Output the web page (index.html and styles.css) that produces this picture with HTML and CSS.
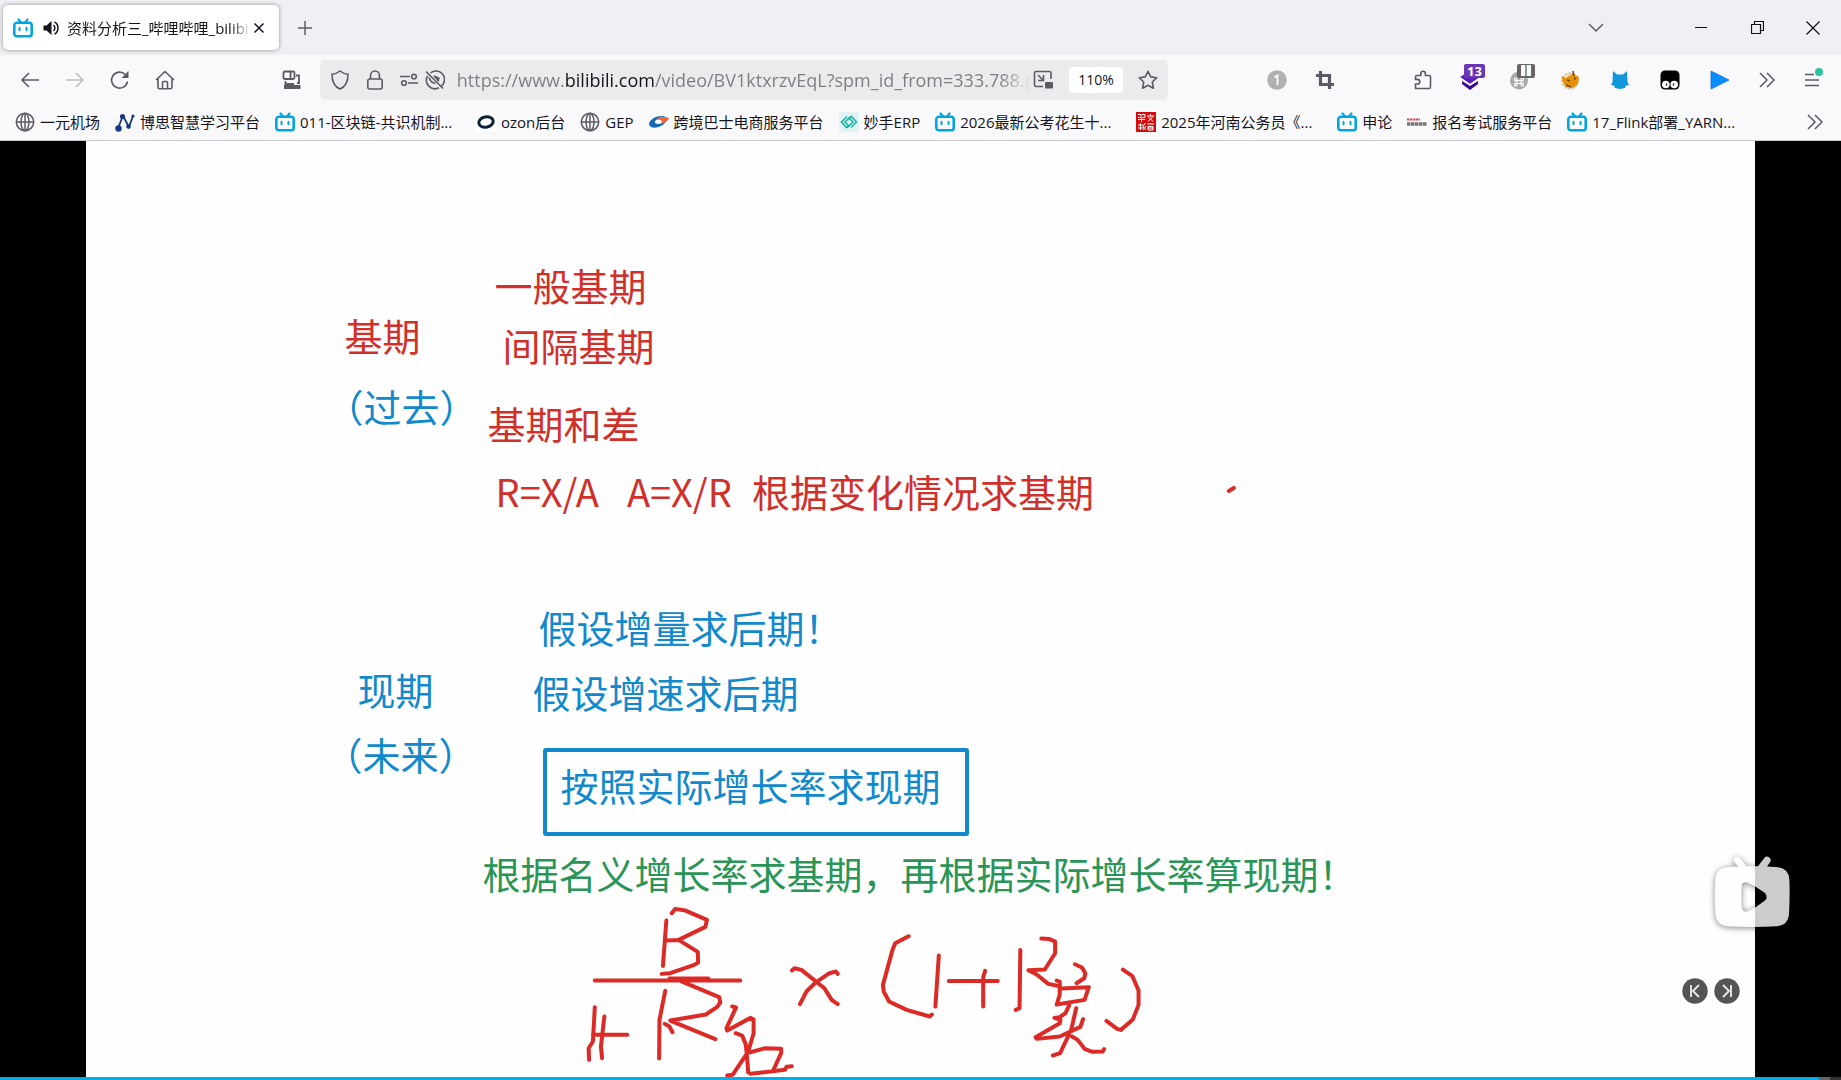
FILE: index.html
```html
<!DOCTYPE html>
<html lang="zh-CN">
<head>
<meta charset="utf-8">
<meta name="viewport" content="width=device-width, initial-scale=1">
<title>资料分析三_哔哩哔哩_bilibili</title>
<link rel="stylesheet" href="styles.css">
</head>
<body>
<svg class="symbols" aria-hidden="true">
  <symbol id="bili" viewBox="0 0 20 20">
    <path d="M5.500 1.500 8 4.500M14.500 1.500 12 4.500" stroke="#00a7de" stroke-width="2.200" stroke-linecap="round"/>
    <rect x="1.300" y="4.800" width="17.400" height="13.500" rx="2.600" fill="#fff" stroke="#00a7de" stroke-width="2.600"/>
    <path d="M6.500 9.800v2.400M13.500 9.800v2.400" stroke="#00a7de" stroke-width="2" stroke-linecap="round"/>
  </symbol>
  <symbol id="globe" viewBox="0 0 20 20">
    <g fill="none" stroke="#5b5b66" stroke-width="1.500"><circle cx="10" cy="10" r="8.700"/><ellipse cx="10" cy="10" rx="4" ry="8.700"/><path d="M1.300 10h17.400M10 1.300v17.400"/></g>
  </symbol>
  <symbol id="more" viewBox="0 0 20 20">
    <path d="m3 3 7 7-7 7M10 3l7 7-7 7" fill="none" stroke="#5b5b66" stroke-width="1.500"/>
  </symbol>
</svg>

<header class="browser">
  <div class="titlebar">
    <div class="tab">
      <svg class="icon"><use href="#bili"/></svg>
      <button class="plain speaker" aria-label="静音标签页">
        <svg width="18" height="18" viewBox="0 0 18 18"><path d="M1.500 6.500v5h3l5 4.500V2l-5 4.500z" fill="#15141a"/><path d="M11.500 6c1.800 1.500 1.800 4.500 0 6M12.500 2.800c4.600 2.500 4.600 9.900 0 12.400" fill="none" stroke="#15141a" stroke-width="1.500"/></svg>
      </button>
      <span class="tab-title">资料分析三_哔哩哔哩_bilibili</span>
      <button class="plain tab-close" aria-label="关闭标签页">
        <svg width="12" height="12" viewBox="0 0 12 12"><path d="m1.500 1.500 9 9m0-9-9 9" stroke="#15141a" stroke-width="1.500"/></svg>
      </button>
    </div>
    <button class="plain new-tab" aria-label="新建标签页">
      <svg width="16" height="16" viewBox="0 0 16 16"><path d="M8 1v14M1 8h14" stroke="#5b5b66" stroke-width="1.500"/></svg>
    </button>
    <div class="window-buttons">
      <button class="plain list-tabs" aria-label="列出所有标签页"><svg width="16" height="10" viewBox="0 0 16 10"><path d="m1 1 7 7 7-7" fill="none" stroke="#5b5b66" stroke-width="1.500"/></svg></button>
      <button class="plain win" aria-label="最小化"><svg width="12" height="12" viewBox="0 0 12 12"><path d="M0 5.500h12" stroke="#111"/></svg></button>
      <button class="plain win" aria-label="还原"><svg width="13" height="13" viewBox="0 0 13 13"><path d="M.500 3.500h9v9h-9zM3.500 3.500v-3h9v9h-3" fill="none" stroke="#111" stroke-width="1.200"/></svg></button>
      <button class="plain win" aria-label="关闭"><svg width="14" height="14" viewBox="0 0 14 14"><path d="m.500.500 13 13m0-13-13 13" stroke="#111" stroke-width="1.200"/></svg></button>
    </div>
  </div>

  <nav class="toolbar" aria-label="导航">
    <button class="plain nav-button" aria-label="后退"><svg class="icon" viewBox="0 0 20 20"><path d="M19 10H2m7-7-7 7 7 7" fill="none" stroke="#5b5b66" stroke-width="1.600"/></svg></button>
    <button class="plain nav-button" aria-label="前进" disabled><svg class="icon" viewBox="0 0 20 20"><path d="M1 10h17m-7-7 7 7-7 7" fill="none" stroke="#bdbdc2" stroke-width="1.600"/></svg></button>
    <button class="plain nav-button" aria-label="重新载入"><svg class="icon" viewBox="0 0 20 20"><path d="M17.500 11.500a8 8 0 1 1-2.200-7" fill="none" stroke="#5b5b66" stroke-width="1.600"/><path d="M18.500 1v7h-7z" fill="#5b5b66"/></svg></button>
    <button class="plain nav-button" aria-label="主页"><svg class="icon" viewBox="0 0 20 20"><path d="m1 10 9-8.500 9 8.500M3 8.500v8.700q0 1.500 1.500 1.500h11q1.500 0 1.500-1.500V8.500M7.500 18.500v-6q0-1 1-1h3q1 0 1 1v6" fill="none" stroke="#5b5b66" stroke-width="1.600"/></svg></button>
    <span class="spring"></span>
    <button class="plain side-button" aria-label="设备"><svg class="icon" viewBox="0 0 20 20"><g fill="none" stroke="#5b5b66" stroke-width="1.800"><rect x="1.500" y="1.500" width="11" height="7.500" rx="1.500"/><path d="M8.500 2v7M14 5.500h3V13h-2M3.500 11v5h8.500"/></g><path d="M4 13h8v2h6.500v4H2v-4h2z" fill="#5b5b66"/></svg></button>

    <div class="urlbar">
      <svg class="icon url-shield" viewBox="0 0 20 20"><path d="M10 1c2.500 2 5 3 8 3.200C18 12 15 17 10 19 5 17 2 12 2 4.200 5 4 7.500 3 10 1z" fill="none" stroke="#5b5b66" stroke-width="1.600"/></svg>
      <svg class="icon url-lock" viewBox="0 0 20 20"><path d="M5.500 9V5.500a4.500 4.500 0 0 1 9 0V9" fill="none" stroke="#5b5b66" stroke-width="1.600"/><rect x="2.800" y="9" width="14.400" height="10" rx="2" fill="none" stroke="#5b5b66" stroke-width="1.600"/></svg>
      <svg class="icon url-perms" viewBox="0 0 20 20"><g fill="none" stroke="#5b5b66" stroke-width="1.600"><path d="M1 6.500h10M9 13h10"/><circle cx="15" cy="6.500" r="2.300"/><circle cx="5" cy="13" r="2.300"/></g></svg>
      <svg class="icon url-eye" viewBox="0 0 20 20"><g fill="none" stroke="#5b5b66" stroke-width="1.600"><path d="m1 1.500 17 17M5.500 3A8.500 8.500 0 0 1 16.500 16M14 17.700A8.500 8.500 0 0 1 2.600 6"/><path d="M4 7.500c1 3.500 3 5.500 6.500 6M9 6l5 5"/></g><path d="m9 5 6 3-2 4z" fill="#5b5b66"/></svg>
      <input class="url-input" type="text" aria-label="网址" spellcheck="false" value="https://www.bilibili.com/video/BV1ktxrzvEqL?spm_id_from=333.788.p">
      <button class="plain url-pip" aria-label="画中画"><svg class="icon" viewBox="0 0 20 20"><path d="M18 9V3q0-1.500-1.500-1.500H3Q1.500 1.500 1.500 3v12q0 1.500 1.500 1.500h7M5 5l5 5m.500-5v5.500H5" fill="none" stroke="#5b5b66" stroke-width="1.600"/><rect x="12" y="12" width="8" height="6.500" rx="1" fill="#5b5b66"/></svg></button>
      <button class="plain zoom-level">110%</button>
      <button class="plain url-star" aria-label="添加书签"><svg class="icon" viewBox="0 0 20 20"><path d="m10 1.300 2.700 5.600 6.100.800-4.500 4.300 1.100 6.200L10 15.200l-5.400 3 1.100-6.200L1.200 7.700l6.100-.800z" fill="none" stroke="#5b5b66" stroke-width="1.600" stroke-linejoin="round"/></svg></button>
    </div>

    <span class="spring"></span>
    <button class="plain ext-first" aria-label="扩展 1"><svg class="icon" viewBox="0 0 20 20"><circle cx="10" cy="10" r="9.800" fill="#b0b0b2"/><path d="M7.500 7.500 10.500 5.500V15" fill="none" stroke="#fff" stroke-width="1.800"/></svg></button>
    <button class="plain ext-first" aria-label="截图"><svg class="icon" viewBox="0 0 20 20"><path d="M5.500 1v13.500H19M1 5.500h13.500V19" fill="none" stroke="#5b5b66" stroke-width="3.200"/></svg></button>
    <button class="plain side-button ext-puzzle" aria-label="扩展"><svg class="icon" viewBox="0 0 20 20"><path d="M2.500 18.500V14h2a2.300 2.300 0 0 0 0-4.600h-2V7q0-1.500 1.500-1.500h3.800V3.500a2.300 2.300 0 0 1 4.600 0v2H16q1.500 0 1.500 1.500v10q0 1.500-1.500 1.500z" fill="none" stroke="#5b5b66" stroke-width="1.600"/></svg></button>
    <button class="plain ext" aria-label="图层扩展"><svg class="icon" viewBox="0 0 20 20"><path d="m0 7 10-6 10 6-10 7z" fill="#5a1fb5"/><path d="m0 7 10 7 10-7v1l-10 7L0 8z" fill="#f9f9fb"/><path d="m2 11 8 5 8-5v3l-8 6-8-6z" fill="#37078f"/></svg><span class="badge badge-purple">13</span></button>
    <button class="plain ext" aria-label="快捷键扩展"><svg class="icon" viewBox="0 0 20 20"><circle cx="9" cy="10.500" r="9" fill="#aaa"/><g fill="none" stroke="#fff" stroke-width="1.200"><path d="M7 10.500h4v3H7z"/><circle cx="5.700" cy="9.500" r="1.300"/><circle cx="12.300" cy="9.500" r="1.300"/><circle cx="5.700" cy="14.500" r="1.300"/><circle cx="12.300" cy="14.500" r="1.300"/></g></svg><span class="badge badge-grey"><i></i></span></button>
    <button class="plain ext" aria-label="小狐狸扩展"><svg class="icon" viewBox="0 0 20 20"><circle cx="10" cy="11" r="8" fill="#f6dfb4" stroke="#999" stroke-dasharray="2 2"/><path d="M1 6l5 2 6-4 1-3 2 4 4 2-1 7-5 4-7-1-3-5z" fill="#e8910c"/><path d="m7 10 3 1m4-3 2 1M6 15l5 2M13 1l1 5" stroke="#744313" stroke-width="1.500"/></svg></button>
    <button class="plain ext" aria-label="猫扩展"><svg class="icon" viewBox="0 0 20 20"><path d="M3 1 7 4.500h6L17 1l.500 11 1.500 3-3 .500-1 2.500-5 1-5-1-1-2.500L1 15l1.500-3z" fill="#1296db"/></svg></button>
    <button class="plain ext" aria-label="脚本管理器"><svg class="icon" viewBox="0 0 20 20"><rect x=".500" y=".500" width="19" height="19" rx="4.500" fill="#000"/><circle cx="5.800" cy="14.500" r="3.800" fill="#fff"/><circle cx="14.200" cy="14.500" r="3.800" fill="#fff"/><path d="M6.500 13.500v2M13.500 13.500v2" stroke="#000" stroke-width="1.200"/></svg></button>
    <button class="plain ext" aria-label="播放扩展"><svg class="icon" viewBox="0 0 20 20"><path d="M1 1 19 10 1 19z" fill="#0b8cff" stroke="#0874d8" stroke-width=".800"/></svg></button>
    <button class="plain side-button" aria-label="更多工具"><svg class="icon"><use href="#more"/></svg></button>
    <button class="plain app-menu" aria-label="打开应用程序菜单"><svg class="icon" viewBox="0 0 20 20"><path d="M3 4.500h9M3 10h14M3 15.500h14" stroke="#5b5b66" stroke-width="1.600"/></svg><span class="menu-dot"></span></button>
  </nav>

  <nav class="bookmarks" aria-label="书签">
    <a class="bookmark" href="#"><svg class="icon"><use href="#globe"/></svg><span>一元机场</span></a>
    <a class="bookmark" href="#"><svg class="icon" viewBox="0 0 20 20"><g stroke="#14397f" stroke-width="1.800" fill="none"><path d="m3 16 5-12 6 11 4-11"/></g><g fill="#14397f"><circle cx="3.500" cy="16.500" r="3.200"/><circle cx="7.500" cy="4.500" r="2.600"/><circle cx="13.500" cy="14.500" r="2.300"/><circle cx="18" cy="4" r="1.600"/></g></svg><span>博思智慧学习平台</span></a>
    <a class="bookmark bookmark-long" href="#"><svg class="icon"><use href="#bili"/></svg><span>011-区块链-共识机制...</span></a>
    <a class="bookmark" href="#"><svg class="icon" viewBox="0 0 20 20"><rect width="20" height="20" fill="#fff"/><ellipse cx="10" cy="10" rx="7.300" ry="5.200" transform="rotate(-12 10 10)" fill="none" stroke="#0b2337" stroke-width="3"/></svg><span>ozon后台</span></a>
    <a class="bookmark" href="#"><svg class="icon"><use href="#globe"/></svg><span>GEP</span></a>
    <a class="bookmark" href="#"><svg class="icon" viewBox="0 0 20 20"><path d="M0 12C1 6 11 2 18 5 12 4 5 8 6 11c2 2 7 1 11-2-2 6-16 10-17 3z" fill="#1769b5"/><path d="M7 8c3-3 9-4 13-2-1 3-5 5-8 5 2-2 0-4-5-3z" fill="#ef6334"/></svg><span>跨境巴士电商服务平台</span></a>
    <a class="bookmark" href="#"><svg class="icon" viewBox="0 0 20 20"><rect width="20" height="20" fill="#e3f3f3"/><path d="M8 4.500 2.500 10 7.500 15.500 9.500 13.500 6 10l5.500-5.500L8.500 8M12 15.500l5.500-5.500-5-5.500-2 2L14 10l-5.500 5.500" fill="none" stroke="#1fb5aa" stroke-width="1.600"/></svg><span>妙手ERP</span></a>
    <a class="bookmark bookmark-long" href="#"><svg class="icon"><use href="#bili"/></svg><span>2026最新公考花生十...</span></a>
    <a class="bookmark bookmark-long" href="#"><svg class="icon" viewBox="0 0 20 20"><rect width="20" height="20" fill="#d60c0c"/><path d="M2 2.500h3v3H2M6 2.500h3v3H6M2 7.500h7M5.500 6v4M11 4h7M14.500 2v2M12 9.500l5-5M17 9.500l-5-5M2 13h5M2 16h5M4.500 11v7M9 11l-2 4 3 3M7 18l3-4M11 12h7M14.500 11v1M12 14.500h5V18h-5zM12 16h5" stroke="#fff" fill="none"/></svg><span>2025年河南公务员《...</span></a>
    <a class="bookmark" href="#"><svg class="icon"><use href="#bili"/></svg><span>申论</span></a>
    <a class="bookmark" href="#"><svg class="icon" viewBox="0 0 20 20"><path d="M0 7.500h13" stroke="#d74a57" stroke-width="2.200" stroke-dasharray="2.500 .500"/><path d="M0 12h20" stroke="#77777b" stroke-width="3.500" stroke-dasharray="3.500 .500"/></svg><span>报名考试服务平台</span></a>
    <a class="bookmark bookmark-long" href="#"><svg class="icon"><use href="#bili"/></svg><span>17_Flink部署_YARN...</span></a>
    <button class="plain bookmarks-more" aria-label="更多书签"><svg class="icon"><use href="#more"/></svg></button>
  </nav>
</header>

<main class="player">
  <div class="slide">
    <p class="note red general">一般基期</p>
    <p class="note red base">基期</p>
    <p class="note red interval">间隔基期</p>
    <p class="note blue past">（过去）</p>
    <p class="note red sum">基期和差</p>
    <p class="note red change"><span>R=X/A</span><span>A=X/R</span><span>根据变化情况求基期</span></p>
    <p class="note blue amount">假设增量求后期！</p>
    <p class="note blue speed">假设增速求后期</p>
    <p class="note blue current">现期</p>
    <p class="note blue future">（未来）</p>
    <p class="note blue boxed">按照实际增长率求现期</p>
    <p class="note green nominal">根据名义增长率求基期，再根据实际增长率算现期！</p>
    <svg class="ink" viewBox="0 0 1670 939" aria-label="B/(1+R名)×(1+R实)">
      <path d="m1143 350 5-3"/>
      <g transform="translate(484 749) scale(.3827 .3333)">
        <path d="M252 92 243 228M266 70 275 57 302 62 358 90 354 111 284 150 254 152M284 150 334 186 335 218 325 225 262 250 240 252M65 272H445M260 266H362M290 274 390 322 393 338 384 352 355 374 262 392 380 448M249 303 234 390 233 506M248 402 260 410 268 427M65 352 60 455 49 475 50 510M90 380 81 470 84 505M60 435H150"/>
        <path d="M424 350 434 353 409 415 411 422 472 384 480 389 480 430 466 485 425 555 411 557M433 430 450 437 459 462 462 490 466 548M462 490 510 475 552 477 552 490 531 542M472 552 562 540 566 531 580 529"/>
        <path d="M580 242 587 235 605 240 665 295 684 330 700 343M700 252 695 245 678 250 640 280 618 305 601 343"/>
        <path d="M885 139 850 160 843 180 818 285 820 305 834 335 880 360 940 380 946 374M964 197 955 350M990 273H1118M1085 243 1080 262V350M1177 180 1175 355 1165 360M1232 146 1252 147 1268 155 1268 190 1241 239 1198 241 1220 254 1250 282 1280 289"/>
        <path d="M1320 223 1338 233 1347 250 1344 265 1324 280M1272 272 1280 275 1280 315 1272 344 1345 330 1356 292 1285 296M1305 346 1295 370 1280 382 1266 384 1282 390 1280 400 1217 442 1220 447 1280 440 1334 411 1341 388M1323 355 1310 420 1281 490 1262 497M1312 440 1327 450 1345 477 1365 486 1392 485 1396 478M1445 239 1470 259 1486 302 1486 345 1471 389 1440 420 1430 417 1402 393"/>
      </g>
    </svg>
    <div class="step-buttons">
      <button class="plain" aria-label="上一步"><svg width="26" height="26" viewBox="0 0 26 26"><circle cx="13" cy="13" r="12.700" fill="#555"/><path d="M9 7v12M17 7l-6 6 6 6" fill="none" stroke="#e8e8e8" stroke-width="1.900"/></svg></button>
      <button class="plain" aria-label="下一步"><svg width="26" height="26" viewBox="0 0 26 26"><circle cx="13" cy="13" r="12.700" fill="#555"/><path d="M17 7v12M9 7l6 6-6 6" fill="none" stroke="#e8e8e8" stroke-width="1.900"/></svg></button>
    </div>
  </div>
  <button class="plain play" aria-label="播放">
    <svg width="76" height="72" viewBox="0 0 76 72"><path fill="#fff" fill-rule="evenodd" d="M24 10.600 20 5.500Q18.800 2.500 21.500 1 24.500 0 26.500 2.500L32.500 10.300H44L50.500 1.800Q52.500-.300 55 1.200 57.800 3.200 56.200 6L53 10.600 64 11.200Q75 12.500 75.400 24 76 40 75 58.500 74 69.500 63 70.200 38 71.800 13 70.200 3 69.300 1.500 59 .200 41 1.300 24 2 12 13 11.200zM28 28Q26.600 41 28 53 29.500 56.800 33.500 55.500 43 51 51 44.500 54.300 41.500 51 37 43 31 33.500 26.600 29.500 25.500 28 28z"/></svg>
  </button>
  <div class="progress"><span class="buffered" style="width:99.4%"></span><span class="played" style="width:98.8%"></span></div>
</main>
</body>
</html>
```
FILE: styles.css
```css
* { box-sizing: border-box; }

body {
  margin: 0;
  min-height: 100vh;
  display: flex;
  flex-direction: column;
  background: #000;
  color: #15141a;
  font: 15px/20px "Open Sans", "Noto Sans CJK SC", sans-serif;
}

p { margin: 0; }

.symbols { position: absolute; width: 0; height: 0; }

.icon { width: 20px; height: 20px; flex: none; display: block; }

.plain {
  margin: 0;
  padding: 0;
  border: 0;
  background: none;
  color: inherit;
  font: inherit;
  display: flex;
  align-items: center;
  justify-content: center;
  flex: none;
}

/* Browser chrome */
.browser { background: #f9f9fb; border-bottom: 1px solid #c8c8cc; }

.titlebar { display: flex; align-items: center; height: 55px; background: #f0f0f4; }

.tab {
  display: flex;
  align-items: center;
  width: 276px;
  height: 45px;
  margin-left: 3px;
  padding: 0 12px 0 10px;
  border-radius: 5px;
  background: #fff;
  box-shadow: 0 0 4px rgba(0, 0, 0, .4);
}

.speaker { width: 18px; margin: 0 7px 0 9px; }

.tab-title {
  flex: 1;
  overflow: hidden;
  white-space: nowrap;
  -webkit-mask-image: linear-gradient(to left, transparent, #000 20px);
  mask-image: linear-gradient(to left, transparent, #000 20px);
}

.tab-close { width: 16px; }
.new-tab { width: 40px; height: 40px; margin-left: 6px; }
.window-buttons { display: flex; margin-left: auto; }
.list-tabs { width: 60px; margin-right: 47px; }
.win { width: 56px; height: 40px; }

.toolbar { display: flex; align-items: center; height: 50px; padding: 0 6px 0 7px; }
.nav-button { width: 45px; height: 40px; }
.side-button { width: 44px; height: 40px; }
.spring { flex: 1; }
.ext-first { width: 48px; height: 40px; }
.ext-puzzle { margin-left: 52px; }
.ext { position: relative; width: 50px; height: 40px; }
.app-menu { position: relative; width: 46px; height: 40px; }

.badge {
  position: absolute;
  top: 4px;
  left: 19px;
  height: 14px;
  border-radius: 2px;
  color: #fff;
  font: bold 13px/14px "Open Sans", sans-serif;
}

.badge-purple { width: 21px; background: #6c35b8; }
.badge-grey { left: 22px; width: 18px; padding: 1px 4px; background: #666; }
.badge-grey i { display: block; height: 11px; border: solid #fff; border-width: 0 4px; background: #8a94b8; }

.menu-dot {
  position: absolute;
  top: 8px;
  right: 12px;
  width: 8px;
  height: 8px;
  border-radius: 50%;
  background: #2ac3a2;
}

.urlbar {
  flex: 10;
  min-width: 0;
  display: flex;
  align-items: center;
  height: 40px;
  margin: 0 2px 0 6px;
  padding: 0 10px;
  border-radius: 5px;
  background: #ebebed;
}

.url-lock { margin-left: 15px; }
.url-perms { margin-left: 14px; }
.url-eye { margin-left: 6px; }

.url-input {
  flex: 1;
  min-width: 0;
  height: 30px;
  margin: 0 3px 0 12px;
  padding: 0;
  border: 0;
  outline: 0;
  font: 18px/30px "Open Sans", sans-serif;
  color: transparent;
  background: linear-gradient(to right, #7c7c82 108px, #15141a 108px, #15141a 198px, #7c7c82 198px, #7c7c82 calc(100% - 30px), transparent);
  -webkit-background-clip: text;
  background-clip: text;
}

.zoom-level {
  width: 54px;
  height: 26px;
  margin: 0 15px 0 16px;
  border-radius: 4px;
  background: #fff;
  font-size: 14px;
}

.bookmarks { display: flex; align-items: center; height: 35px; padding: 0 16px 2px 15px; }

.bookmark {
  display: flex;
  align-items: center;
  flex: none;
  gap: 5px;
  padding-right: 15px;
  color: inherit;
  text-decoration: none;
  white-space: nowrap;
}

.bookmark-long { width: 201px; }
.bookmarks-more { margin-left: auto; }

/* Video area */
.player {
  position: relative;
  flex: 1;
  display: flex;
  justify-content: center;
  background: #000;
}

.slide {
  position: relative;
  width: 90.7%;
  min-height: 900px;
  background: #fefefe;
}

.note {
  position: absolute;
  font: 38px/38px "Noto Sans CJK SC", sans-serif;
  white-space: nowrap;
}

.red { color: #d0302a; }
.blue { color: #1189cc; }
.green { color: #2a9556; }

.general { left: 409px; top: 125px; }
.base { left: 259px; top: 175px; }
.interval { left: 417px; top: 185px; }
.past { left: 240px; top: 246px; }
.sum { left: 402px; top: 263px; }
.change { left: 410px; top: 331px; display: flex; }
.change span:first-child { margin-right: 28px; }
.change span:last-child { margin-left: 20px; }
.amount { left: 453px; top: 467px; }
.speed { left: 447px; top: 532px; }
.current { left: 272px; top: 529px; }
.future { left: 239px; top: 594px; }

.boxed {
  left: 457px;
  top: 607px;
  padding: 14px 24px 28px 14px;
  border: 4px solid #1189cc;
  border-radius: 3px;
}

.nominal { left: 397px; top: 713px; }

.ink {
  position: absolute;
  left: 0;
  top: 0;
  width: 100%;
  fill: none;
  stroke: #dc2a26;
  stroke-width: 4;
  stroke-linecap: round;
  stroke-linejoin: round;
}

.ink path { vector-effect: non-scaling-stroke; }

.step-buttons {
  position: absolute;
  right: 15px;
  bottom: 76px;
  display: flex;
  gap: 6px;
}

.play {
  position: absolute;
  right: 51px;
  bottom: 152px;
  opacity: .8;
  filter: drop-shadow(0 1px 3px rgba(0, 0, 0, .6));
}

.progress {
  position: absolute;
  left: 0;
  right: 0;
  bottom: 0;
  height: 3px;
  background: #333;
}

.progress span { position: absolute; left: 0; top: 0; height: 3px; }
.buffered { background: #666; }
.played { background: #00aeec; }
```
